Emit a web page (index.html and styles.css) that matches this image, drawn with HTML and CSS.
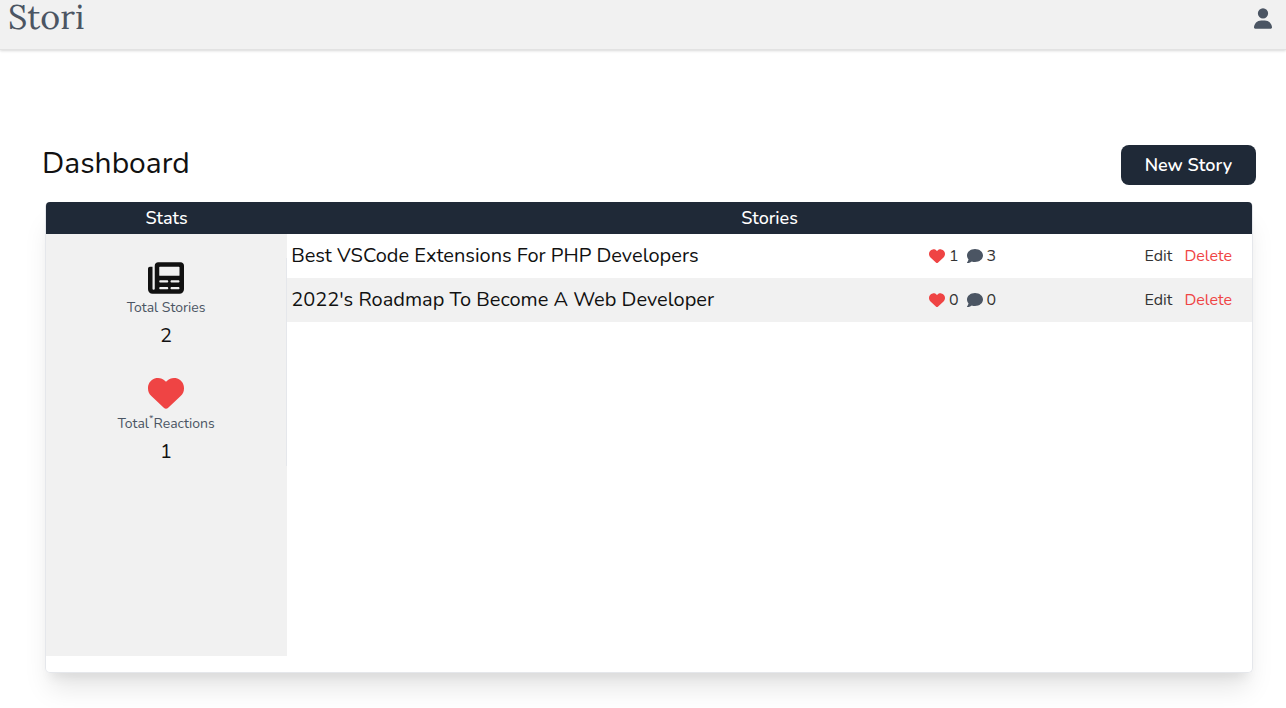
FILE: index.html
```html
<!DOCTYPE html>
<html lang="en">
<head>
<meta charset="utf-8">
<meta name="viewport" content="width=device-width, initial-scale=1">
<title>Stori</title>
<link rel="stylesheet" href="styles.css">
</head>
<body>
<svg class="symbols" aria-hidden="true">
  <symbol id="heart" viewBox="0 0 512 512"><path d="M47.6 300.4 228.300 469.100c7.500 7 17.400 10.900 27.700 10.900s20.200-3.900 27.700-10.900L464.400 300.400c30.400-28.300 47.600-68 47.600-109.500v-5.800c0-69.900-50.500-129.500-119.400-141C347 36.500 300.600 51.400 268 84l-12 12-12-12c-32.600-32.600-79-47.500-124.600-39.900C50.500 55.600 0 115.200 0 185.100v5.800c0 41.500 17.200 81.200 47.600 109.500z"/></symbol>
  <symbol id="comment" viewBox="0 0 512 512"><path d="M512 240c0 114.900-114.600 208-256 208-37.100 0-72.300-6.400-104.100-17.900-11.900 8.700-31.300 20.600-54.300 30.600C73.600 471.100 44.700 480 16 480c-6.500 0-12.300-3.900-14.800-9.900s-1.100-12.800 3.400-17.400l.3-.3c.3-.3.7-.7 1.300-1.400 1.100-1.200 2.800-3.100 4.900-5.700 4.100-5 9.600-12.400 15.200-21.600 10-16.600 19.500-38.400 21.400-62.900C17.700 326.800 0 285.100 0 240 0 125.100 114.600 32 256 32s256 93.100 256 208z"/></symbol>
</svg>
<header class="topbar">
  <a class="logo" href="#">Stori</a>
  <button class="account" type="button" aria-label="Account">
    <svg class="account-icon" viewBox="0 0 448 512"><path d="M224 256a128 128 0 1 0 0-256 128 128 0 1 0 0 256zm-45.700 48C79.800 304 0 383.800 0 482.300 0 498.700 13.300 512 29.700 512h388.600c16.400 0 29.700-13.300 29.700-29.700 0-98.500-79.800-178.300-178.300-178.300z"/></svg>
  </button>
</header>
<main class="page">
  <div class="page-head">
    <h1 class="page-title">Dashboard</h1>
    <button class="new-story" type="button">New Story</button>
  </div>
  <div class="card">
    <section class="stats">
      <h2 class="card-head card-head-left">Stats</h2>
      <div class="stats-body">
        <div class="stat">
          <svg class="stat-icon" viewBox="0 0 512 448" aria-hidden="true"><path fill-rule="evenodd" d="M96 48c0-26.500 21.500-48 48-48h320c26.500 0 48 21.500 48 48v336c0 35.300-28.700 64-64 64H64c-35.300 0-64-28.700-64-64V92c0-17.700 12.300-28 28-28h36v312a16 16 0 0 0 32 0zm64 24v112c0 4.400 3.600 8 8 8h272c4.400 0 8-3.600 8-8V72c0-4.400-3.600-8-8-8H168c-4.400 0-8 3.600-8 8zm0 200c0 8.800 7.200 16 16 16h96c8.800 0 16-7.200 16-16s-7.200-16-16-16h-96c-8.800 0-16 7.200-16 16zm160 0c0 8.800 7.200 16 16 16h96c8.800 0 16-7.200 16-16s-7.200-16-16-16h-96c-8.800 0-16 7.200-16 16zM160 368c0 8.800 7.200 16 16 16h96c8.800 0 16-7.200 16-16s-7.200-16-16-16h-96c-8.800 0-16 7.200-16 16zm160 0c0 8.800 7.200 16 16 16h96c8.800 0 16-7.200 16-16s-7.200-16-16-16h-96c-8.800 0-16 7.200-16 16z"/></svg>
          <div class="stat-label">Total Stories</div>
          <div class="stat-value">2</div>
        </div>
        <div class="stat">
          <svg class="stat-icon stat-heart" aria-hidden="true"><use href="#heart"/></svg>
          <div class="stat-label">Total<span class="note">*</span>Reactions</div>
          <div class="stat-value">1</div>
        </div>
      </div>
    </section>
    <section class="stories">
      <h2 class="card-head card-head-right">Stories</h2>
      <table class="story-table">
        <tbody>
          <tr>
            <td class="story-title">Best VSCode Extensions For PHP Developers</td>
            <td class="story-counts"><div class="counts"><svg class="mini heart"><use href="#heart"/></svg><span>1</span><svg class="mini comment"><use href="#comment"/></svg><span>3</span></div></td>
            <td class="story-actions"><div class="actions"><a class="edit" href="#">Edit</a><a class="delete" href="#">Delete</a></div></td>
          </tr>
          <tr>
            <td class="story-title">2022's Roadmap To Become A Web Developer</td>
            <td class="story-counts"><div class="counts"><svg class="mini heart"><use href="#heart"/></svg><span>0</span><svg class="mini comment"><use href="#comment"/></svg><span>0</span></div></td>
            <td class="story-actions"><div class="actions"><a class="edit" href="#">Edit</a><a class="delete" href="#">Delete</a></div></td>
          </tr>
        </tbody>
      </table>
    </section>
  </div>
</main>
</body>
</html>
```
FILE: styles.css
```css
* { box-sizing: border-box; }
body { margin: 0; background: #fff; color: #111; font-family: Nunito, Lato, sans-serif; font-size: 16px; line-height: 24px; }
h1, h2 { margin: 0; font-weight: 400; }
a { text-decoration: none; color: inherit; }
button { font: inherit; border: 0; padding: 0; cursor: pointer; }
svg { fill: currentColor; display: block; }
.symbols { position: absolute; width: 0; height: 0; }

.topbar { display: flex; justify-content: space-between; align-items: flex-start; height: 50px; padding: 0 14px 0 8px; background: #f1f1f1; border-bottom: 1px solid #e2e2e2; box-shadow: 0 1px 3px rgba(0,0,0,.1), 0 1px 2px rgba(0,0,0,.06); color: #4b5563; }
.logo { font-family: Lora, "Liberation Serif", serif; font-size: 34px; line-height: 34px; }
.account { background: none; color: inherit; padding-top: 8px; }
.account-icon { width: 18px; height: 21px; }

.page { padding: 95px 30px 36px 40px; }
.page-head { display: flex; justify-content: space-between; align-items: center; height: 40px; }
.page-title { font-size: 30px; line-height: 36px; padding: 0 0 2px 2px; }
.new-story { height: 40px; padding: 0 24px; background: #1f2937; color: #fff; border-radius: 8px; font-size: 18px; font-weight: 600; }

.card { display: grid; grid-template-columns: 1fr 4fr; min-height: 471px; margin: 17px 3px 0 5px; border: 1px solid #e5e7eb; border-top: 0; border-radius: 5px; box-shadow: 0 20px 25px -5px rgba(0,0,0,.1), 0 10px 10px -5px rgba(0,0,0,.06); }
.card-head { height: 32px; line-height: 32px; text-align: center; font-size: 18px; font-weight: 500; background: #1f2937; color: #fff; }
.card-head-left { border-top-left-radius: 4px; }
.card-head-right { border-top-right-radius: 4px; }
.stats { display: flex; flex-direction: column; padding-bottom: 16px; }
.stats-body { flex: 1; padding-top: 24px; background: #f1f1f1; }
.stat { display: flex; flex-direction: column; align-items: center; padding-top: 4px; padding-bottom: 24px; border-right: 1px solid #e5e7eb; }
.stat:last-child { padding-bottom: 0; }
.stat-icon { width: 36px; height: 32px; }
.stat-heart { height: 36px; margin: -3px 0 -1px; color: #ef4444; }
.stat-label { font-size: 14px; line-height: 28px; color: #4b5563; }
.note { font-size: 10px; vertical-align: super; line-height: 8px; }
.stat-value { font-size: 20px; line-height: 28px; }

.story-table { width: 100%; border-collapse: collapse; table-layout: fixed; }
.story-table tr:nth-child(even) { background: #f1f1f1; }
.story-table td { height: 44px; padding: 0; }
.story-title { width: 66%; font-size: 20px; }
.story-table .story-title { padding-left: 4px; }
.counts { display: flex; align-items: center; gap: 4px; padding-left: 5px; color: #333; }
.mini { width: 16px; height: 16px; }
.heart { color: #ef4444; }
.comment { color: #4b5563; margin-left: 4px; }
.actions { display: flex; justify-content: flex-end; gap: 12px; padding-right: 20px; }
.edit { color: #333; }
.delete { color: #ef4444; }
```
